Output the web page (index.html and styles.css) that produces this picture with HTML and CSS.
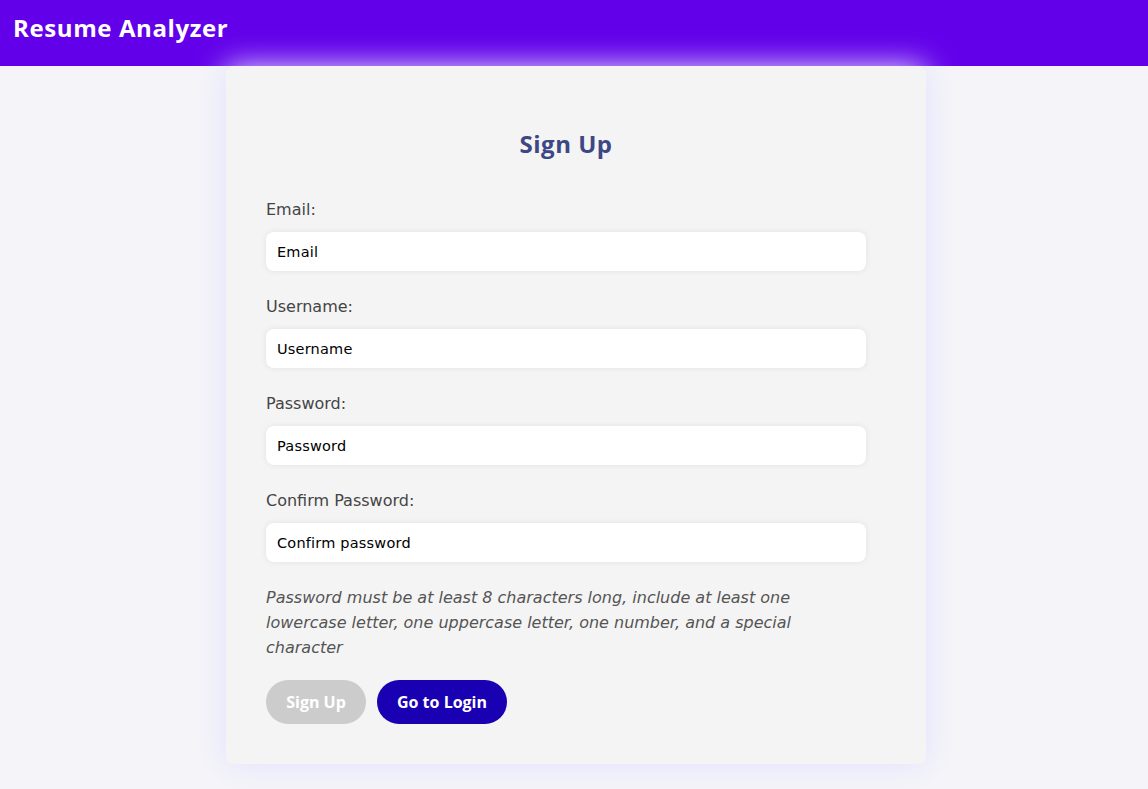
FILE: index.html
```html
<!DOCTYPE html>
<html lang="en">
<head>
<meta charset="utf-8">
<title>Resume Analyzer - Sign Up</title>
<link rel="stylesheet" href="styles.css">
</head>
<body>
<header class="topbar">
  <h1 class="brand">Resume Analyzer</h1>
</header>
<main class="page">
  <section class="card">
    <form class="form">
      <h2 class="title">Sign Up</h2>
      <div class="group">
        <label class="label" for="email">Email:</label>
        <input class="field" id="email" type="text" value="Email">
      </div>
      <div class="group">
        <label class="label" for="username">Username:</label>
        <input class="field" id="username" type="text" value="Username">
      </div>
      <div class="group">
        <label class="label" for="password">Password:</label>
        <input class="field" id="password" type="text" value="Password">
      </div>
      <div class="group">
        <label class="label" for="confirm">Confirm Password:</label>
        <input class="field" id="confirm" type="text" value="Confirm password">
      </div>
      <p class="hint">Password must be at least 8 characters long, include at least one lowercase letter, one uppercase letter, one number, and a special character</p>
      <div class="actions">
        <button type="button" class="btn btn-disabled">Sign Up</button>
        <button type="button" class="btn btn-primary">Go to Login</button>
      </div>
    </form>
  </section>
</main>
</body>
</html>
```
FILE: styles.css
```css
* { box-sizing: border-box; }
html, body {
  margin: 0;
  padding: 0;
}
body {
  background: #f4f4f9;
  font-family: "DejaVu Sans", "Noto Sans", sans-serif;
  color: #444;
  min-height: 789px;
}
.topbar {
  height: 66px;
  background: #6200ea;
  padding: 10px 13px 0;
}
.brand {
  margin: 0;
  color: #fff;
  font-family: "Open Sans", "Noto Sans", sans-serif;
  font-size: 24px;
  line-height: 36px;
  font-weight: 700;
  letter-spacing: 0.6px;
}
.page {
  display: flex;
  justify-content: center;
  padding-left: 4px;
}
.card {
  width: 700px;
  background: #f4f4f4;
  border-radius: 8px;
  padding: 40px;
  box-shadow: 0 0 30px #e2e0ff;
}
.form {
  width: 600px;
}
.title {
  margin: 20px 0 36px;
  text-align: center;
  color: #3d4785;
  font-family: "Open Sans", "Noto Sans", sans-serif;
  font-size: 24px;
  line-height: 36px;
  font-weight: 700;
  letter-spacing: 0.5px;
}
.group {
  margin-bottom: 24px;
}
.label {
  display: block;
  font-size: 16px;
  line-height: 24px;
  color: #444;
  margin-bottom: 10px;
}
.field {
  display: block;
  width: 100%;
  height: 39px;
  border: none;
  border-radius: 8px;
  background: #fff;
  padding: 0 11px;
  font-family: "DejaVu Sans", "Noto Sans", sans-serif;
  font-size: 14.5px;
  letter-spacing: 0.2px;
  color: #000;
  box-shadow: 0 0 6px rgba(0, 0, 0, 0.08);
  outline: none;
}
.hint {
  margin: -1px 0 20px;
  font-size: 16px;
  line-height: 25px;
  font-style: italic;
  color: #555;
}
.actions {
  display: flex;
  gap: 11px;
}
.btn {
  height: 44px;
  border: none;
  border-radius: 22px;
  padding: 0;
  font-family: "Open Sans", "Noto Sans", sans-serif;
  font-size: 16px;
  font-weight: 700;
  color: #fff;
  white-space: nowrap;
}
.btn-disabled {
  background: #cccccc;
  width: 100px;
}
.btn-primary {
  background: #1900b3;
  width: 130px;
}
```
